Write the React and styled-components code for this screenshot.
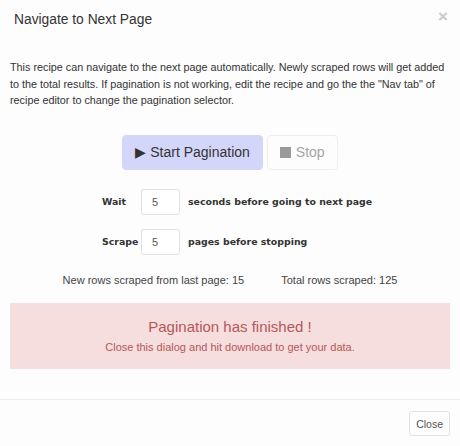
import React from 'react';
import styled, { createGlobalStyle } from 'styled-components';

const GlobalStyle = createGlobalStyle`
  html, body {
    margin: 0;
    padding: 0;
    background: #fdfdfd;
  }
  body {
    font-family: "Liberation Sans", Arial, sans-serif;
    color: #333;
  }
`;

const Dialog = styled.div`
  width: 460px;
  height: 446px;
  display: flex;
  flex-direction: column;
  background: #fdfdfd;
`;

const Header = styled.div`
  display: flex;
  align-items: center;
  justify-content: space-between;
  padding: 5px 12px 0 14px;
  height: 28px;
`;

const Title = styled.h4`
  margin: 0;
  font-size: 13.8px;
  font-weight: normal;
  color: #333;
`;

const CloseX = styled.span`
  font-size: 17px;
  font-weight: bold;
  color: #c8c8c8;
  line-height: 1;
  margin-top: -5px;
`;

const Body = styled.div`
  padding: 26px 10px 0 10px;
  flex: 1;
`;

const Intro = styled.p`
  margin: 0;
  font-size: 10.8px;
  line-height: 16.5px;
  color: #333;
`;

const ButtonRow = styled.div`
  display: flex;
  justify-content: center;
  gap: 4px;
  margin-top: 26px;
`;

const Button = styled.button`
  font-family: "Liberation Sans", Arial, sans-serif;
  font-size: 14px;
  height: 35px;
  padding: 0 12px;
  border-radius: 4px;
  display: flex;
  align-items: center;
  gap: 5px;
  cursor: pointer;
  border: 1px solid ${({ $primary }) => ($primary ? '#d3d6f8' : '#efefef')};
  background: ${({ $primary }) => ($primary ? '#d3d6f8' : '#fdfdfd')};
  color: ${({ $primary }) => ($primary ? '#333' : '#a5a5a5')};
`;

const StopSquare = styled.span`
  display: inline-block;
  width: 11px;
  height: 11px;
  background: #9a9a9a;
`;

const Form = styled.div`
  display: flex;
  flex-direction: column;
  gap: 14px;
  margin-top: 19px;
  padding-left: 92px;
`;

const FieldRow = styled.div`
  display: flex;
  align-items: center;
`;

const Label = styled.span`
  width: 39px;
  font-family: "DejaVu Sans", Verdana, sans-serif;
  font-size: 9.4px;
  font-weight: bold;
  color: #333;
`;

const NumInput = styled.input`
  width: 39px;
  height: 26px;
  box-sizing: border-box;
  border: 1px solid #e2e2e2;
  border-radius: 3px;
  padding: 0 0 0 10px;
  font-family: "Liberation Sans", Arial, sans-serif;
  font-size: 11px;
  color: #555;
  background: #fff;
  margin-right: 8px;
`;

const Hint = styled.span`
  font-family: "DejaVu Sans", Verdana, sans-serif;
  font-size: 9.4px;
  font-weight: bold;
  color: #333;
`;

const Stats = styled.div`
  display: flex;
  justify-content: center;
  gap: 37px;
  margin-top: 19px;
  font-size: 11px;
  color: #444;
`;

const Alert = styled.div`
  margin-top: 17px;
  background: #f6dede;
  color: #b5585a;
  text-align: center;
  padding: 15px 10px 16px;
`;

const AlertTitle = styled.div`
  font-size: 15px;
  line-height: 18px;
`;

const AlertText = styled.div`
  font-size: 11px;
  margin-top: 5px;
`;

const Footer = styled.div`
  border-top: 1px solid #efefef;
  display: flex;
  justify-content: flex-end;
  padding: 11px 10px 10px;
`;

const SmallButton = styled.button`
  font-family: "Liberation Sans", Arial, sans-serif;
  font-size: 10.5px;
  color: #555;
  background: #fdfdfd;
  border: 1px solid #e3e3e3;
  border-radius: 3px;
  height: 25px;
  padding: 0 6px;
  cursor: pointer;
`;

export default function App() {
  return (
    <>
      <GlobalStyle />
      <Dialog>
        <Header>
          <Title>Navigate to Next Page</Title>
          <CloseX>×</CloseX>
        </Header>
        <Body>
          <Intro>
            This recipe can navigate to the next page automatically. Newly scraped rows will get added
            to the total results. If pagination is not working, edit the recipe and go the the "Nav tab" of
            recipe editor to change the pagination selector.
          </Intro>
          <ButtonRow>
            <Button $primary>▶ Start Pagination</Button>
            <Button><StopSquare /> Stop</Button>
          </ButtonRow>
          <Form>
            <FieldRow>
              <Label>Wait</Label>
              <NumInput defaultValue="5" />
              <Hint>seconds before going to next page</Hint>
            </FieldRow>
            <FieldRow>
              <Label>Scrape</Label>
              <NumInput defaultValue="5" />
              <Hint>pages before stopping</Hint>
            </FieldRow>
          </Form>
          <Stats>
            <span>New rows scraped from last page: 15</span>
            <span>Total rows scraped: 125</span>
          </Stats>
          <Alert>
            <AlertTitle>Pagination has finished !</AlertTitle>
            <AlertText>Close this dialog and hit download to get your data.</AlertText>
          </Alert>
        </Body>
        <Footer>
          <SmallButton>Close</SmallButton>
        </Footer>
      </Dialog>
    </>
  );
}
